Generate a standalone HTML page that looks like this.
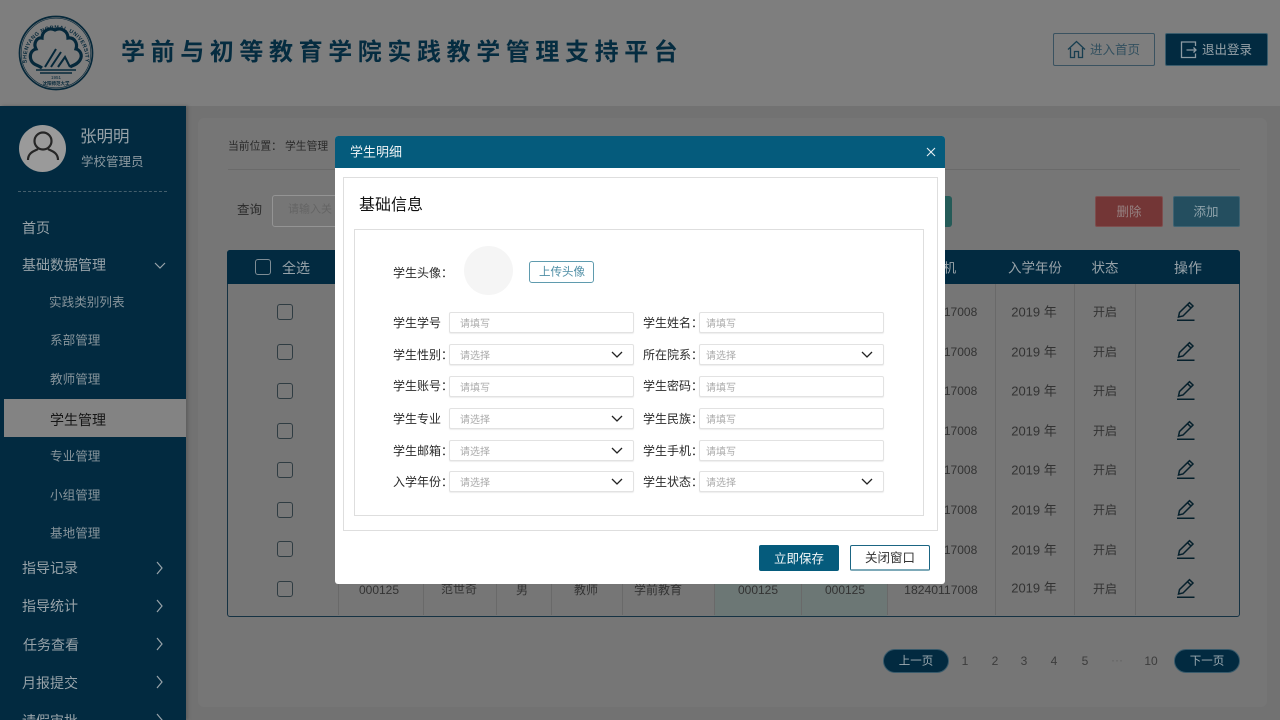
<!DOCTYPE html>
<html lang="zh-CN">
<head>
<meta charset="utf-8">
<title>学生明细</title>
<style>
*{box-sizing:border-box;margin:0;padding:0}
html,body{width:1280px;height:720px;overflow:hidden;background:#727272}
body{position:relative;font-family:"Liberation Sans","Noto Sans CJK SC",sans-serif;color:#333}
.a{position:absolute;white-space:nowrap}
.t{position:absolute;white-space:nowrap;transform:translate(-50%,-50%);line-height:1}
.l{position:absolute;white-space:nowrap;transform:translateY(-50%);line-height:1}
.menu{color:#98a3a9;font-size:14px}
.sub{color:#87949b;font-size:12.600px}
.cb{position:absolute;width:16px;height:16px;border:1px solid #2f3c42;border-radius:3px;background:#787878}
.vd{position:absolute;width:1px;background:#696969;top:284px;height:331px}
.cell{font-size:12px;color:#333}
.lbl{font-size:12px;color:#2a2a2a}
.in{position:absolute;width:185px;height:21px;border:1px solid #e2e2e2;border-radius:2px;background:#fff;box-shadow:0 1px 1px #eee;font-size:10px;color:#aaa;line-height:21px;padding-left:10px;padding-top:1px}
.in svg{position:absolute;right:10px;top:6px}
.pg{font-size:12px;color:#3c3c3c}
</style>
</head>
<body>
<!-- header -->
<div class="a" style="left:0;top:0;width:1280px;height:106px;background:#7e7e7e"></div>
<svg class="a" style="left:14px;top:10px" width="84" height="86" viewBox="0 0 84 86">
  <g fill="none" stroke="#06283a">
    <circle cx="42" cy="43" r="36.500" stroke-width="1.700"/>
    <circle cx="42" cy="43" r="34.800" stroke-width=".6"/>
    <path d="M28 58C24 55 19 55 17 50C15 44 18 40 22 39C19 33 23 27 28 28C28 21 35 17 41 20C47 17 54 21 54 28C60 27 64 33 62 39C66 40 69 45 66 50C63 55 59 55 56 57" stroke-width="3.200"/>
    <path d="M31 57L42 39M37 57L47 42M44 57L51 47L56 57" stroke-width="2"/>
    <path d="M22 60H62M26 63H58" stroke-width="1.500"/>
  </g>
  <defs><path id="ring" d="M13 54A29.500 29.500 0 1 1 71 54"/></defs>
  <text font-size="5.400" font-weight="700" fill="#06283a" letter-spacing=".45" font-family="Liberation Sans,sans-serif"><textPath href="#ring" startOffset="1">SHENYANG NORMAL UNIVERSITY</textPath></text>
  <text x="42" y="69" text-anchor="middle" font-size="4.500" fill="#06283a" font-family="Liberation Sans,sans-serif">1951</text>
  <text x="42" y="75" text-anchor="middle" font-size="4.500" font-weight="700" fill="#06283a" font-family="Liberation Sans,Noto Sans CJK SC,sans-serif">沈阳师范大学</text>
</svg>
<div class="l" style="left:121px;top:53px;font-size:24px;font-weight:700;letter-spacing:5.600px;color:#052c40">学前与初等教育学院实践教学管理支持平台</div>

<div class="a" style="left:1053px;top:33px;width:102px;height:33px;border:1px solid #3a5260;border-radius:2px"></div>
<svg class="a" style="left:1067px;top:40px" width="19" height="19" viewBox="0 0 19 19" fill="none" stroke="#183e50" stroke-width="1.300"><path d="M1 9.500L9.500 1.500L18 9.500M3.500 8V17.500H7.500V11.500H11.500V17.500H15.500V8"/></svg>
<div class="l" style="left:1090px;top:50px;font-size:12.500px;color:#33505f">进入首页</div>
<div class="a" style="left:1165px;top:33px;width:103px;height:33px;background:#022a40;border:1px solid #3a5c6c;border-radius:2px"></div>
<svg class="a" style="left:1180px;top:41px" width="18" height="18" viewBox="0 0 18 18" fill="none" stroke="#8d9ba3" stroke-width="1.300"><path d="M15.500 5V1H1.500V16.500H15.500V12.500M6.500 9H16M13.500 6.500L16 9L13.500 11.500"/></svg>
<div class="l" style="left:1202px;top:50px;font-size:12.500px;color:#98a3a9">退出登录</div>

<!-- sidebar -->
<div class="a" style="left:0;top:106px;width:186px;height:614px;background:#022a40;box-shadow:2px 0 3px #5e5e5e"></div>
<div class="a" style="left:19px;top:125px;width:47px;height:47px;border-radius:50%;background:#9a9a9a"></div>
<svg class="a" style="left:19px;top:125px" width="47" height="47" viewBox="0 0 47 47" fill="none" stroke="#262626" stroke-width="2.200"><circle cx="24" cy="16" r="8.500"/><path d="M9 35C9 27 16 26 19 24M39 35C39 27 32 26 29 24"/></svg>
<div class="l" style="left:80px;top:137px;font-size:16.500px;color:#98a3a9">张明明</div>
<div class="l" style="left:81px;top:162px;font-size:12.500px;color:#8b989f">学校管理员</div>
<div class="a" style="left:18px;top:191px;width:149px;border-top:1px dashed #445e6c"></div>

<div class="l menu" style="left:22px;top:228px">首页</div>
<div class="l menu" style="left:22px;top:265px">基础数据管理</div>
<svg class="a" style="left:154px;top:262px" width="12" height="8" viewBox="0 0 12 8" fill="none" stroke="#98a3a9" stroke-width="1.200"><path d="M1 1L6 6L11 1"/></svg>
<div class="l sub" style="left:49px;top:303px">实践类别列表</div>
<div class="l sub" style="left:50px;top:341px">系部管理</div>
<div class="l sub" style="left:50px;top:380px">教师管理</div>
<div class="a" style="left:4px;top:399px;width:182px;height:38px;background:#838383"></div>
<div class="l" style="left:50px;top:420px;font-size:14px;color:#161616">学生管理</div>
<div class="l sub" style="left:50px;top:457px">专业管理</div>
<div class="l sub" style="left:50px;top:496px">小组管理</div>
<div class="l sub" style="left:50px;top:534px">基地管理</div>
<div class="l menu" style="left:22px;top:568px">指导记录</div>
<div class="l menu" style="left:22px;top:606px">指导统计</div>
<div class="l menu" style="left:23px;top:645px">任务查看</div>
<div class="l menu" style="left:22px;top:683px">月报提交</div>
<div class="l menu" style="left:22px;top:721px">请假审批</div>
<svg class="a" style="left:155px;top:561px" width="9" height="165" viewBox="0 0 9 165" fill="none" stroke="#98a3a9" stroke-width="1.200"><path d="M2 1L7 7L2 13M2 39L7 45L2 51M2 77L7 83L2 89M2 115L7 121L2 127M2 153L7 159L2 165"/></svg>

<!-- content card -->
<div class="a" style="left:198px;top:118px;width:1069px;height:589px;background:#767676;border-radius:6px"></div>
<div class="l" style="left:228px;top:147px;font-size:10.800px;color:#2a2a2a">当前位置： 学生管理</div>
<div class="a" style="left:228px;top:169px;width:1012px;border-top:1px solid #6a6a6a"></div>
<div class="l" style="left:237px;top:210px;font-size:12.500px;color:#2a2a2a">查询</div>
<div class="a" style="left:272px;top:195px;width:80px;height:32px;border:1px solid #949494;border-radius:3px"></div>
<div class="l" style="left:288px;top:210px;font-size:11px;color:#646464">请输入关</div>
<div class="a" style="left:900px;top:196px;width:52px;height:31px;background:#255b58;border-radius:3px"></div>
<div class="a" style="left:1095px;top:196px;width:68px;height:31px;background:#733636;border:1px solid #7e4e4e;border-radius:2px"></div>
<div class="t" style="left:1129px;top:212px;font-size:12.500px;color:#968282">删除</div>
<div class="a" style="left:1173px;top:196px;width:67px;height:31px;background:#244e5f;border:1px solid #3f6372;border-radius:2px"></div>
<div class="t" style="left:1206px;top:212px;font-size:12.500px;color:#8fa3ab">添加</div>

<!-- table -->
<div class="a" style="left:227px;top:250px;width:1013px;height:367px;border:1px solid #153243;border-radius:3px"></div>
<div class="a" style="left:227px;top:250px;width:1013px;height:34px;background:#022a40;border-radius:3px 3px 0 0"></div>
<div class="a" style="left:255px;top:259px;width:16px;height:16px;border:1px solid #7f8d95;border-radius:3px"></div>
<div class="l" style="left:282px;top:268px;font-size:14px;color:#98a3a9">全选</div>
<div class="t" style="left:946px;top:268px;font-size:13px;color:#98a3a9">&nbsp;&nbsp;机</div>
<div class="t" style="left:1035px;top:268px;font-size:13.500px;color:#98a3a9">入学年份</div>
<div class="t" style="left:1105px;top:268px;font-size:13.500px;color:#98a3a9">状态</div>
<div class="t" style="left:1188px;top:268px;font-size:14px;color:#98a3a9">操作</div>
<div class="a" style="left:714px;top:575px;width:173px;height:41px;background:#6c7775"></div>
<div class="vd" style="left:338px"></div><div class="vd" style="left:423px"></div><div class="vd" style="left:496px"></div><div class="vd" style="left:551px"></div><div class="vd" style="left:622px"></div><div class="vd" style="left:714px"></div><div class="vd" style="left:801px"></div><div class="vd" style="left:887px"></div><div class="vd" style="left:995px"></div><div class="vd" style="left:1074px"></div><div class="vd" style="left:1135px"></div>

<div class="cb" style="left:277px;top:304px"></div>
<div class="cb" style="left:277px;top:344px"></div>
<div class="cb" style="left:277px;top:383px"></div>
<div class="cb" style="left:277px;top:423px"></div>
<div class="cb" style="left:277px;top:462px"></div>
<div class="cb" style="left:277px;top:502px"></div>
<div class="cb" style="left:277px;top:541px"></div>
<div class="cb" style="left:277px;top:581px"></div>

<div class="t cell" style="left:941px;top:312px">18240117008</div>
<div class="t cell" style="left:941px;top:352px">18240117008</div>
<div class="t cell" style="left:941px;top:391px">18240117008</div>
<div class="t cell" style="left:941px;top:431px">18240117008</div>
<div class="t cell" style="left:941px;top:470px">18240117008</div>
<div class="t cell" style="left:941px;top:510px">18240117008</div>
<div class="t cell" style="left:941px;top:550px">18240117008</div>
<div class="t cell" style="left:941px;top:590px;font-size:12.200px">18240117008</div>

<div class="t cell" style="left:1034px;top:312px;font-size:13px">2019 年</div>
<div class="t cell" style="left:1034px;top:352px;font-size:13px">2019 年</div>
<div class="t cell" style="left:1034px;top:391px;font-size:13px">2019 年</div>
<div class="t cell" style="left:1034px;top:431px;font-size:13px">2019 年</div>
<div class="t cell" style="left:1034px;top:470px;font-size:13px">2019 年</div>
<div class="t cell" style="left:1034px;top:510px;font-size:13px">2019 年</div>
<div class="t cell" style="left:1034px;top:550px;font-size:13px">2019 年</div>
<div class="t cell" style="left:1034px;top:588px;font-size:13px">2019 年</div>

<div class="t cell" style="left:1105px;top:312px">开启</div>
<div class="t cell" style="left:1105px;top:352px">开启</div>
<div class="t cell" style="left:1105px;top:391px">开启</div>
<div class="t cell" style="left:1105px;top:431px">开启</div>
<div class="t cell" style="left:1105px;top:470px">开启</div>
<div class="t cell" style="left:1105px;top:510px">开启</div>
<div class="t cell" style="left:1105px;top:550px">开启</div>
<div class="t cell" style="left:1105px;top:589px">开启</div>

<svg class="a" style="left:1176px;top:301px" width="20" height="308" viewBox="0 0 20 308" fill="none" stroke="#06202c" stroke-width="1.500">
  <g><path d="M2.500 16L3.500 11.500L13.500 1.700L17 5L7 15L2.500 16ZM11.500 3.700L15 7M1 19.200H18.500"/></g>
  <g transform="translate(0,40)"><path d="M2.500 16L3.500 11.500L13.500 1.700L17 5L7 15L2.500 16ZM11.500 3.700L15 7M1 19.200H18.500"/></g>
  <g transform="translate(0,79)"><path d="M2.500 16L3.500 11.500L13.500 1.700L17 5L7 15L2.500 16ZM11.500 3.700L15 7M1 19.200H18.500"/></g>
  <g transform="translate(0,119)"><path d="M2.500 16L3.500 11.500L13.500 1.700L17 5L7 15L2.500 16ZM11.500 3.700L15 7M1 19.200H18.500"/></g>
  <g transform="translate(0,158)"><path d="M2.500 16L3.500 11.500L13.500 1.700L17 5L7 15L2.500 16ZM11.500 3.700L15 7M1 19.200H18.500"/></g>
  <g transform="translate(0,198)"><path d="M2.500 16L3.500 11.500L13.500 1.700L17 5L7 15L2.500 16ZM11.500 3.700L15 7M1 19.200H18.500"/></g>
  <g transform="translate(0,238)"><path d="M2.500 16L3.500 11.500L13.500 1.700L17 5L7 15L2.500 16ZM11.500 3.700L15 7M1 19.200H18.500"/></g>
  <g transform="translate(0,277)"><path d="M2.500 16L3.500 11.500L13.500 1.700L17 5L7 15L2.500 16ZM11.500 3.700L15 7M1 19.200H18.500"/></g>
</svg>

<div class="t cell" style="left:379px;top:590px">000125</div>
<div class="t cell" style="left:459px;top:589px">范世奇</div>
<div class="t cell" style="left:522px;top:590px">男</div>
<div class="t cell" style="left:586px;top:590px">教师</div>
<div class="t cell" style="left:658px;top:590px">学前教育</div>
<div class="t cell" style="left:758px;top:590px">000125</div>
<div class="t cell" style="left:845px;top:590px">000125</div>

<!-- pagination -->
<div class="a" style="left:883px;top:649px;width:66px;height:24px;border-radius:12px;background:#022a40;border:1px solid #37596a"></div>
<div class="t" style="left:916px;top:662px;font-size:11.500px;color:#9fabb1">上一页</div>
<div class="t pg" style="left:965px;top:661px">1</div>
<div class="t pg" style="left:995px;top:661px">2</div>
<div class="t pg" style="left:1024px;top:661px">3</div>
<div class="t pg" style="left:1054px;top:661px">4</div>
<div class="t pg" style="left:1085px;top:661px">5</div>
<div class="t pg" style="left:1117px;top:660px;color:#606060">···</div>
<div class="t pg" style="left:1151px;top:661px">10</div>
<div class="a" style="left:1174px;top:649px;width:66px;height:24px;border-radius:12px;background:#022a40;border:1px solid #37596a"></div>
<div class="t" style="left:1207px;top:662px;font-size:11.500px;color:#9fabb1">下一页</div>

<!-- modal -->
<div class="a" style="left:335px;top:136px;width:610px;height:448px;background:#fff;border-radius:3px;overflow:hidden">
  <div class="a" style="left:0;top:0;width:610px;height:32px;background:#055b7c"></div>
</div>
<div class="l" style="left:350px;top:152px;font-size:13px;color:#eef3f5">学生明细</div>
<svg class="a" style="left:926px;top:147px" width="10" height="10" viewBox="0 0 10 10" fill="none" stroke="#e8f0f3" stroke-width="1.100"><path d="M1 1L9 9M9 1L1 9"/></svg>
<div class="a" style="left:343px;top:177px;width:595px;height:354px;border:1px solid #dedede"></div>
<div class="l" style="left:359px;top:206px;font-size:16px;color:#111">基础信息</div>
<div class="a" style="left:354px;top:229px;width:570px;height:287px;border:1px solid #dedede"></div>

<div class="l lbl" style="left:393px;top:273px">学生头像：</div>
<div class="a" style="left:464px;top:246px;width:49px;height:49px;border-radius:50%;background:#f5f5f5"></div>
<div class="a" style="left:529px;top:261px;width:65px;height:22px;border:1px solid #5f9bae;border-radius:3px;background:#fff"></div>
<div class="t" style="left:562px;top:273px;font-size:11.500px;color:#4f8ea5">上传头像</div>

<div class="l lbl" style="left:393px;top:323px">学生学号</div>
<div class="in" style="left:449px;top:312px">请填写</div>
<div class="l lbl" style="left:643px;top:323px">学生姓名：</div>
<div class="in" style="left:699px;top:312px;padding-left:6px">请填写</div>

<div class="l lbl" style="left:393px;top:355px">学生性别：</div>
<div class="in" style="left:449px;top:344px">请选择<svg width="12" height="8" viewBox="0 0 12 8" fill="none" stroke="#222" stroke-width="1.300"><path d="M1 1L6 6L11 1"/></svg></div>
<div class="l lbl" style="left:643px;top:355px">所在院系：</div>
<div class="in" style="left:699px;top:344px;padding-left:6px">请选择<svg width="12" height="8" viewBox="0 0 12 8" fill="none" stroke="#222" stroke-width="1.300"><path d="M1 1L6 6L11 1"/></svg></div>

<div class="l lbl" style="left:393px;top:386px">学生账号：</div>
<div class="in" style="left:449px;top:376px">请填写</div>
<div class="l lbl" style="left:643px;top:386px">学生密码：</div>
<div class="in" style="left:699px;top:376px;padding-left:6px">请填写</div>

<div class="l lbl" style="left:393px;top:419px">学生专业</div>
<div class="in" style="left:449px;top:408px">请选择<svg width="12" height="8" viewBox="0 0 12 8" fill="none" stroke="#222" stroke-width="1.300"><path d="M1 1L6 6L11 1"/></svg></div>
<div class="l lbl" style="left:643px;top:419px">学生民族：</div>
<div class="in" style="left:699px;top:408px;padding-left:6px">请填写</div>

<div class="l lbl" style="left:393px;top:451px">学生邮箱：</div>
<div class="in" style="left:449px;top:440px">请选择<svg width="12" height="8" viewBox="0 0 12 8" fill="none" stroke="#222" stroke-width="1.300"><path d="M1 1L6 6L11 1"/></svg></div>
<div class="l lbl" style="left:643px;top:451px">学生手机：</div>
<div class="in" style="left:699px;top:440px;padding-left:6px">请填写</div>

<div class="l lbl" style="left:393px;top:482px">入学年份：</div>
<div class="in" style="left:449px;top:471px">请选择<svg width="12" height="8" viewBox="0 0 12 8" fill="none" stroke="#222" stroke-width="1.300"><path d="M1 1L6 6L11 1"/></svg></div>
<div class="l lbl" style="left:643px;top:482px">学生状态：</div>
<div class="in" style="left:699px;top:471px;padding-left:6px">请选择<svg width="12" height="8" viewBox="0 0 12 8" fill="none" stroke="#222" stroke-width="1.300"><path d="M1 1L6 6L11 1"/></svg></div>

<div class="a" style="left:759px;top:545px;width:80px;height:26px;background:#055b7c;border-radius:2px"></div>
<div class="t" style="left:799px;top:559px;font-size:12.500px;color:#f2f6f8">立即保存</div>
<div class="a" style="left:850px;top:545px;width:80px;height:26px;background:#fff;border:1px solid #1b6583;border-bottom:2px solid #7da9b8;border-radius:2px"></div>
<div class="t" style="left:890px;top:558px;font-size:12.500px;color:#333">关闭窗口</div>
</body>
</html>
